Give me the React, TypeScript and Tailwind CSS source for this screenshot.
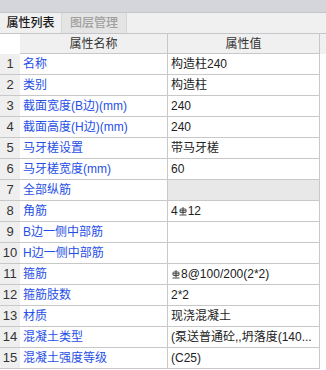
import React from 'react';

type Row = { name: string; value: React.ReactNode; group?: boolean };

// 三级钢筋符号
function RebarMark() {
    return (
        <svg width="8" height="9" viewBox="0 0 8 9" className="inline-block align-top mt-[1px] mx-[1px]" fill="none" stroke="#333" strokeWidth="0.9">
            <line x1="4" y1="0" x2="4" y2="7.5" />
            <rect x="1" y="2" width="6" height="3.6" rx="0.8" />
            <line x1="1" y1="3.8" x2="7" y2="3.8" />
            <line x1="0.5" y1="8" x2="7.5" y2="8" />
        </svg>
    );
}

const rows: Row[] = [
    { name: '名称', value: '构造柱240' },
    { name: '类别', value: '构造柱' },
    { name: '截面宽度(B边)(mm)', value: '240' },
    { name: '截面高度(H边)(mm)', value: '240' },
    { name: '马牙槎设置', value: '带马牙槎' },
    { name: '马牙槎宽度(mm)', value: '60' },
    { name: '全部纵筋', value: '', group: true },
    { name: '角筋', value: <>4<RebarMark />12</> },
    { name: 'B边一侧中部筋', value: '' },
    { name: 'H边一侧中部筋', value: '' },
    { name: '箍筋', value: <><RebarMark />8@100/200(2*2)</> },
    { name: '箍筋肢数', value: '2*2' },
    { name: '材质', value: '现浇混凝土' },
    { name: '混凝土类型', value: '(泵送普通砼,,坍落度(140...' },
    { name: '混凝土强度等级', value: '(C25)' },
];

export default function App() {
    return (
        <div
            className="w-[326px] h-[370px] overflow-hidden bg-white text-[12px] text-[#222]"
            style={{ fontFamily: '"Liberation Sans", "Noto Sans CJK SC", sans-serif' }}
        >
            {/* top strip */}
            <div className="h-3 bg-[#d4d6dc]" />

            {/* tabs */}
            <div className="flex h-[22px] bg-[#f0f0f0] border-t border-b border-[#c4c6cc]">
                <div className="w-[62px] flex items-center justify-center border-r border-[#d6d6d6] text-[12px] font-medium text-[#1a1a1a]">
                    属性列表
                </div>
                <div className="w-[65px] flex items-center justify-center bg-[#e4e4e4] border-r border-[#d6d6d6] text-[12px] font-medium text-[#a0a0a0]">
                    图层管理
                </div>
            </div>

            {/* header */}
            <div className="flex h-[20px] bg-[#f0f0f0]">
                <div className="w-[20px] bg-white" />
                <div className="w-[148px] flex items-center justify-center border-r border-b border-[#c8c8c8] text-[#333]">
                    属性名称
                </div>
                <div className="w-[152px] flex items-center justify-center border-r border-b border-[#c8c8c8] text-[#333]">
                    属性值
                </div>
            </div>

            {/* rows */}
            {rows.map((row, i) => (
                <div key={i} className="flex h-[21px]">
                    <div className="w-[20px] flex items-center justify-center bg-[#efefef] border-b border-[#c8c8c8] text-[13px] text-[#333]">
                        {i + 1}
                    </div>
                    <div className="w-[148px] flex items-center pl-[3px] border-r border-b border-[#c8c8c8] text-[#1f4fe6] whitespace-nowrap">
                        {row.name}
                    </div>
                    <div
                        className={`w-[152px] flex items-center pl-[3px] border-r border-b border-[#c8c8c8] whitespace-nowrap overflow-hidden ${row.group ? 'bg-[#e8e8e8]' : ''}`}
                    >
                        {row.value}
                    </div>
                </div>
            ))}
        </div>
    );
}
